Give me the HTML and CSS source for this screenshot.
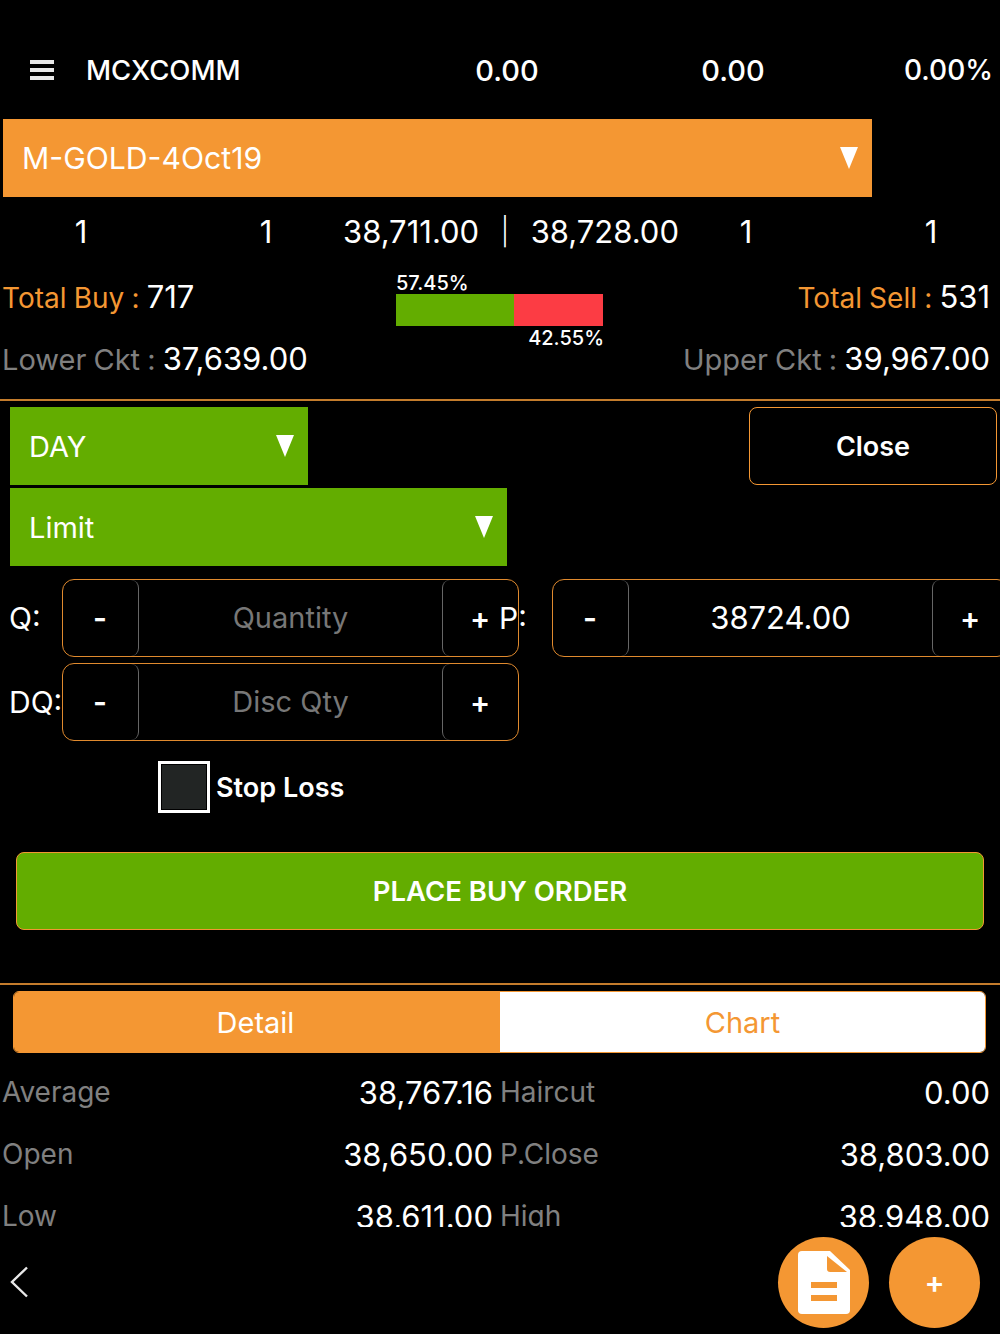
FILE: index.html
```html
<!DOCTYPE html>
<html lang="en">
<head>
    <meta charset="UTF-8">
    <meta name="viewport" content="width=device-width, initial-scale=1.0">
    <title>Place Order</title>
    <link rel="stylesheet" href="styles.css">
</head>
<body>

    <div class="header">
        <div class="menu-icon"><span></span><span></span><span></span></div>
        <div class="header-name">MCXCOMM</div>
        <div class="header-num h1">0.00</div>
        <div class="header-num h2">0.00</div>
        <div class="header-num h3">0.00%</div>
    </div>

    <div class="select select-symbol">
        <span>M-GOLD-4Oct19</span>
        <i class="arrow"></i>
    </div>

    <div class="depth">
        <span class="depth-qty q1">1</span>
        <span class="depth-qty q2">1</span>
        <div class="depth-price">
            <span>38,711.00</span>
            <span class="depth-sep">|</span>
            <span>38,728.00</span>
        </div>
        <span class="depth-qty q3">1</span>
        <span class="depth-qty q4">1</span>
    </div>

    <div class="totals">
        <div class="stat"><span class="orange">Total Buy : </span>717</div>
        <div class="ratio">
            <div class="ratio-top">57.45%</div>
            <div class="ratio-bar">
                <div class="ratio-buy" style="width: 57%"></div>
                <div class="ratio-sell"></div>
            </div>
            <div class="ratio-bottom">42.55%</div>
        </div>
        <div class="stat stat-right"><span class="orange">Total Sell : </span>531</div>
    </div>

    <div class="circuit">
        <div class="stat"><span class="grey">Lower Ckt : </span>37,639.00</div>
        <div class="stat"><span class="grey">Upper Ckt : </span>39,967.00</div>
    </div>

    <div class="order-form">
        <div class="validity-row">
            <div class="select select-day">
                <span>DAY</span>
                <i class="arrow"></i>
            </div>
            <button class="close-btn">Close</button>
        </div>

        <div class="select select-type">
            <span>Limit</span>
            <i class="arrow"></i>
        </div>

        <div class="field-row">
            <label class="field-label">Q:</label>
            <div class="stepper">
                <div class="step step-minus">-</div>
                <div class="step-value placeholder">Quantity</div>
                <div class="step step-plus">+</div>
            </div>
            <label class="field-label label-price">P:</label>
            <div class="stepper stepper-price">
                <div class="step step-minus">-</div>
                <div class="step-value value-price">38724.00</div>
                <div class="step step-plus">+</div>
            </div>
        </div>

        <div class="field-row field-row-dq">
            <label class="field-label">DQ:</label>
            <div class="stepper">
                <div class="step step-minus">-</div>
                <div class="step-value placeholder">Disc Qty</div>
                <div class="step step-plus">+</div>
            </div>
        </div>

        <div class="stop-loss">
            <div class="checkbox"></div>
            <span>Stop Loss</span>
        </div>

        <button class="place-btn">PLACE BUY ORDER</button>
    </div>

    <div class="tabs">
        <div class="tab tab-active">Detail</div>
        <div class="tab">Chart</div>
    </div>

    <div class="details">
        <div class="detail-row">
            <span class="detail-key">Average</span><span class="detail-val">38,767.16</span>
            <span class="detail-key">Haircut</span><span class="detail-val">0.00</span>
        </div>
        <div class="detail-row">
            <span class="detail-key">Open</span><span class="detail-val">38,650.00</span>
            <span class="detail-key">P.Close</span><span class="detail-val">38,803.00</span>
        </div>
        <div class="detail-row">
            <span class="detail-key">Low</span><span class="detail-val">38,611.00</span>
            <span class="detail-key">High</span><span class="detail-val">38,948.00</span>
        </div>
    </div>

    <div class="footer">
        <svg class="back-icon" width="20" height="32" viewBox="0 0 20 32">
            <path d="M18 1.5 L3 16 L18 30.5" fill="none" stroke="#e8e8e8" stroke-width="2.4"/>
        </svg>
        <div class="fab-group">
            <div class="fab">
                <svg width="52" height="63" viewBox="0 0 52 63">
                    <path d="M4 0 H32 L52 19 V59 a4 4 0 0 1 -4 4 H4 a4 4 0 0 1 -4 -4 V4 a4 4 0 0 1 4 -4 Z" fill="#fff"/>
                    <path d="M29 5 L49 21 H32 a3 3 0 0 1 -3 -3 Z" fill="#f49733"/>
                    <rect x="13" y="31" width="26" height="6" fill="#f49733"/>
                    <rect x="13" y="44" width="26" height="6" fill="#f49733"/>
                </svg>
            </div>
            <div class="fab fab-plus">+</div>
        </div>
    </div>

</body>
</html>
```

FILE: styles.css
```css
* {
    box-sizing: border-box;
}
html, body {
    margin: 0;
    padding: 0;
}
body {
    width: 1000px;
    height: 1334px;
    overflow: hidden;
    background-color: #000;
    color: #fff;
    font-family: Inter, "Liberation Sans", sans-serif;
    font-size: 31px;
}
.orange {
    color: #f49733;
    font-size: 28px;
    word-spacing: -0.7px;
}
.grey {
    color: #808080;
    font-size: 29px;
    word-spacing: -1px;
}

/* header */
.header {
    display: flex;
    align-items: center;
    height: 40px;
    margin-top: 50px;
    padding-left: 30px;
    font-size: 29px;
    font-weight: 500;
}
.menu-icon {
    display: flex;
    flex-direction: column;
    gap: 4px;
    width: 24px;
}
.menu-icon span {
    height: 4px;
    background-color: #e8e8e8;
}
.header-name {
    margin-left: 32px;
    width: 153px;
    font-size: 27.5px;
    white-space: nowrap;
}
.header-num {
    text-align: center;
}
.h1 {
    margin-left: 235px;
    width: 66px;
}
.h2 {
    margin-left: 160px;
    width: 66px;
}
.h3 {
    margin-left: 138px;
    width: 86px;
    font-size: 28px;
}

/* selects */
.select {
    display: flex;
    align-items: center;
    justify-content: space-between;
    height: 78px;
    padding: 0 14px 0 19px;
    font-size: 29px;
    color: #fff;
}
.select-symbol {
    width: 869px;
    margin: 29px 0 0 3px;
    background-color: #f49733;
    font-size: 30.2px;
}
.select-day {
    width: 298px;
    background-color: #63ad00;
}
.select-type {
    width: 497px;
    margin-top: 3px;
    background-color: #63ad00;
}
.arrow {
    width: 0;
    height: 0;
    border-left: 9px solid transparent;
    border-right: 9px solid transparent;
    border-top: 22px solid #fff;
}

/* best bid / ask */
.depth {
    display: flex;
    align-items: center;
    height: 68px;
    font-size: 31px;
}
.depth-qty {
    text-align: center;
    width: 40px;
}
.q1 {
    margin-left: 61px;
}
.q2 {
    margin-left: 145px;
}
.depth-price {
    display: flex;
    justify-content: space-between;
    align-items: center;
    width: 336px;
    margin-left: 57px;
    white-space: nowrap;
}
.depth-sep {
    font-size: 27px;
    font-weight: 300;
}
.q3 {
    margin-left: 47px;
}
.q4 {
    margin-left: 145px;
}

/* totals */
.totals {
    display: grid;
    grid-template-columns: 394px 212px 1fr;
    grid-template-rows: 64px;
    height: 64px;
    align-items: center;
    margin-top: -1px;
    padding: 0 10px 0 2px;
}
.circuit {
    display: flex;
    justify-content: space-between;
    align-items: center;
    height: 58px;
    margin-top: 1px;
    padding: 0 10px 0 2px;
}
.stat {
    white-space: nowrap;
}
.stat-right {
    text-align: right;
}
.ratio {
    align-self: start;
    margin-top: 8px;
    font-size: 20px;
    font-weight: 500;
}
.ratio-top {
    height: 22px;
    line-height: 22px;
}
.ratio-bar {
    display: flex;
    width: 207px;
    height: 32px;
}
.ratio-buy {
    background-color: #63ad00;
}
.ratio-sell {
    flex: 1;
    background-color: #fc3c44;
}
.ratio-bottom {
    height: 22px;
    line-height: 24px;
    text-align: right;
    padding-right: 4px;
}

/* order form */
.order-form {
    border-top: 2px solid #c47c2c;
    border-bottom: 2px solid #c47c2c;
    margin-top: 12px;
    padding-top: 6px;
    padding-left: 10px;
    height: 586px;
}
.validity-row {
    display: flex;
    justify-content: space-between;
    align-items: center;
    padding-right: 3px;
}
.close-btn {
    width: 248px;
    height: 78px;
    background-color: #000;
    border: 1px solid #f49733;
    border-radius: 8px;
    color: #fff;
    font-family: inherit;
    font-size: 27px;
    font-weight: 600;
}
.field-row {
    display: flex;
    align-items: center;
    margin-top: 13px;
    white-space: nowrap;
}
.field-row-dq {
    margin-top: 6px;
}
.field-label {
    flex-shrink: 0;
    width: 52px;
    font-size: 30px;
    margin-left: -1px;
}
.field-row > .stepper:first-of-type {
    margin-left: 1px;
}
.label-price {
    width: 25px;
    margin-left: -20px;
    margin-right: 28px;
}
.stepper {
    display: flex;
    flex-shrink: 0;
    width: 457px;
    height: 78px;
    border: 1px solid #e08a2e;
    border-radius: 12px;
}
.step {
    display: flex;
    align-items: center;
    justify-content: center;
    width: 76px;
    flex-shrink: 0;
    padding-right: 1px;
    font-size: 30px;
    font-weight: 600;
    border: 1px solid #666;
    border-width: 0 1px 0 0;
    border-radius: 8px;
}
.step-plus {
    border-width: 0 0 0 1px;
}
.step-value {
    flex: 1;
    display: flex;
    align-items: center;
    justify-content: center;
    padding-bottom: 2px;
    font-size: 29px;
}
.value-price {
    font-size: 31px;
}
.placeholder {
    color: #777;
}
.stop-loss {
    display: flex;
    align-items: center;
    gap: 6px;
    margin: 20px 0 0 148px;
    font-size: 27px;
    font-weight: 600;
}
.checkbox {
    width: 52px;
    height: 52px;
    background-color: #222524;
    border: 3px solid #fff;
    outline: 1px solid #000;
    outline-offset: -4px;
}
.place-btn {
    display: block;
    width: 968px;
    height: 78px;
    margin: 39px 0 0 6px;
    background-color: #63ad00;
    border: 1px solid #f49733;
    border-radius: 8px;
    color: #fff;
    font-family: inherit;
    font-size: 27.5px;
    font-weight: 600;
}

/* detail / chart */
.tabs {
    display: flex;
    width: 973px;
    height: 62px;
    margin: 6px 0 0 13px;
    border: 1px solid #f49733;
    border-radius: 6px;
    overflow: hidden;
}
.tab {
    flex: 1;
    display: flex;
    align-items: center;
    justify-content: center;
    background-color: #fff;
    color: #f49733;
    font-size: 29px;
}
.tab-active {
    flex: 0 0 486px;
    background-color: #f49733;
    color: #fff;
    padding-right: 3px;
}
.details {
    height: 174px;
    overflow: hidden;
    padding: 8px 10px 0 2px;
}
.detail-row {
    display: flex;
    align-items: center;
    height: 62px;
}
.detail-key {
    color: #808080;
    width: 100px;
    font-size: 28px;
}
.detail-val {
    text-align: right;
    width: 390px;
}
.detail-key:first-child {
    width: 151px;
}
.detail-val:nth-child(2) {
    width: 340px;
    margin-right: 7px;
}
.detail-row .detail-val:last-child {
    flex: 1;
    width: auto;
}

/* bottom bar */
.footer {
    display: flex;
    justify-content: space-between;
    align-items: center;
    padding: 10px 20px 0 9px;
}
.back-icon {
    margin-bottom: 2px;
}
.fab-group {
    display: flex;
    gap: 20px;
}
.fab {
    display: flex;
    align-items: center;
    justify-content: center;
    width: 91px;
    height: 91px;
    border-radius: 50%;
    background-color: #f49733;
}
.fab-plus {
    font-size: 30px;
    font-weight: 600;
    padding-bottom: 2px;
}
```
